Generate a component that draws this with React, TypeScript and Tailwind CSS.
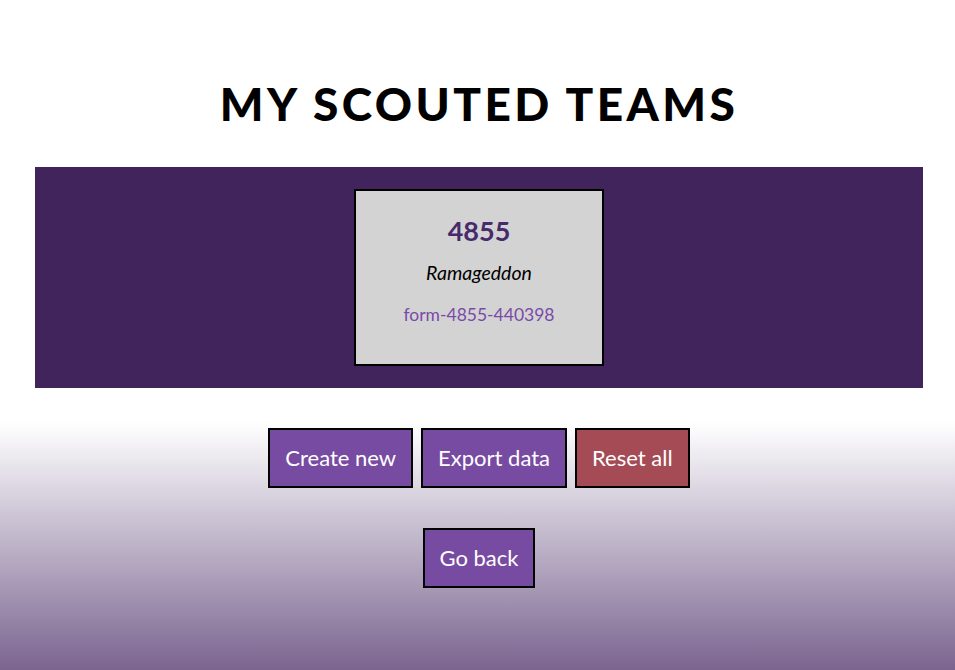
import React from 'react';

const teams = [{ number: '4855', name: 'Ramageddon', form: 'form-4855-440398' }];

const Btn = ({ label, danger }: { label: string; danger?: boolean }) => (
  <button
    className={`h-[60px] px-[15px] border-2 border-black text-white text-[22px] leading-none ${
      danger ? 'bg-[#a44b56]' : 'bg-[#784ba2]'
    }`}
  >
    {label}
  </button>
);

export default function App() {
  return (
    <div
      className="min-h-[670px] w-full pl-[3px] bg-[linear-gradient(to_bottom,#ffffff_0%,#ffffff_63%,#7b6590_100%)] flex flex-col items-center"
      style={{ fontFamily: 'Lato, "Open Sans", sans-serif' }}
    >
      <h1 className="mt-[76px] text-[46px] font-black tracking-[3.4px] leading-[56px] text-black">
        MY SCOUTED TEAMS
      </h1>

      {/* team list */}
      <div className="mt-[35px] w-[888px] h-[221px] bg-[#41245c] flex justify-center pt-[22px]">
        {teams.map((t) => (
          <div
            key={t.number}
            className="w-[250px] h-[177px] bg-[#d3d3d3] border-2 border-black flex flex-col items-center"
          >
            <div className="mt-[24px] text-[27px] font-bold text-[#472a6b] leading-[32px]">{t.number}</div>
            <div className="mt-[14px] text-[19.5px] italic text-black leading-[24px]">{t.name}</div>
            <div className="mt-[20px] text-[17.5px] text-[#7a4aa8] leading-[20px]">{t.form}</div>
          </div>
        ))}
      </div>

      <div className="mt-[40px] flex gap-2">
        <Btn label="Create new" />
        <Btn label="Export data" />
        <Btn label="Reset all" danger />
      </div>
      <div className="mt-[40px] flex">
        <Btn label="Go back" />
      </div>
    </div>
  );
}
